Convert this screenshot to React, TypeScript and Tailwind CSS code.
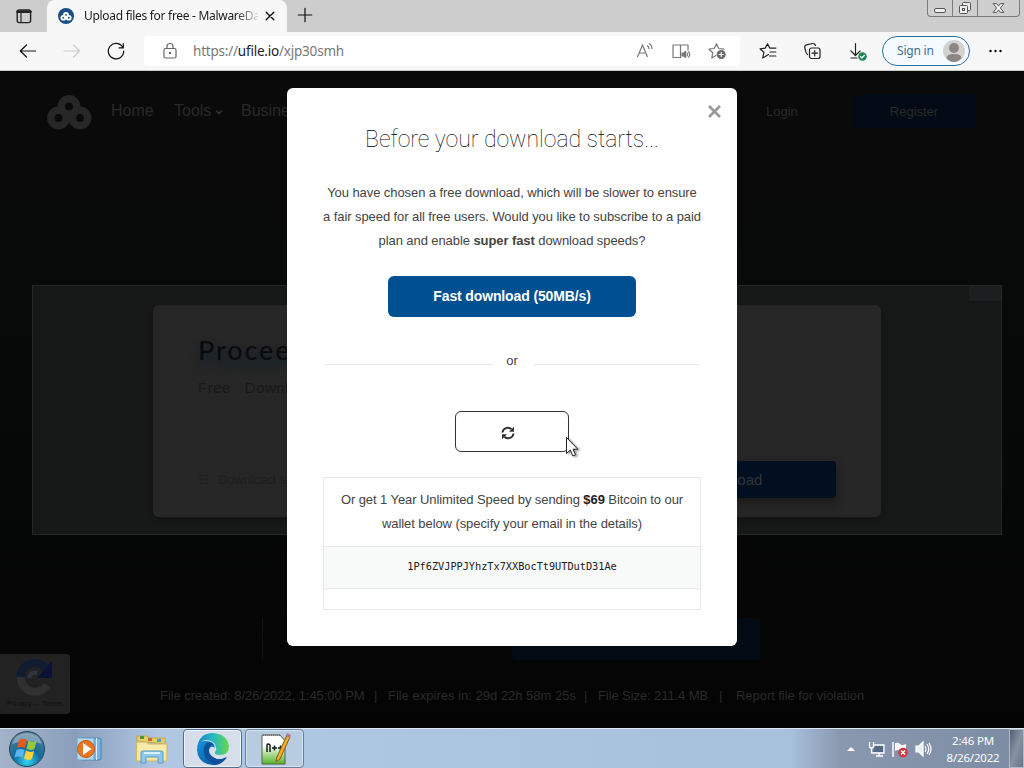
import type { ReactNode } from 'react'

function UfileMark({ className, color }: { className: string; color: string }) {
  return (
    <svg className={className} viewBox="0 0 46 36" fill="none" stroke={color} strokeWidth="7.5">
      <circle cx="12.5" cy="23" r="7.7" />
      <circle cx="34" cy="23" r="7.7" />
      <circle cx="23" cy="11.500" r="7.7" />
      <path d="M17.500 18l11.500 10" strokeWidth="6.500" />
    </svg>
  )
}

function Icon({ children, className = 'size-5', color = '#222' }: { children: ReactNode; className?: string; color?: string }) {
  return (
    <svg className={`shrink-0 ${className}`} viewBox="0 0 20 20" fill="none" stroke={color} strokeWidth="1.2" strokeLinecap="round" strokeLinejoin="round">
      {children}
    </svg>
  )
}

function TabStrip() {
  return (
    <div className="flex h-8 bg-[#cdcdcd]">
      <div className="flex w-[47px] items-center justify-center">
        <Icon className="size-5">
          <rect x="3.2" y="4" width="13.4" height="12.6" rx="2" strokeWidth="1.4" />
          <path d="M3.5 5.700h13" strokeWidth="2.600" />
          <path d="M7 6v10" />
        </Icon>
      </div>
      <div className="flex w-60 items-center rounded-t-lg bg-[#f7f7f7] pl-[11px]">
        <div className="flex size-4 items-center justify-center rounded-full bg-[#1a4f86]">
          <UfileMark className="h-[9px] w-3" color="#fff" />
        </div>
        <div className="ml-2.5 w-[174px] font-['Noto_Sans'] text-[12px] leading-4 tracking-[-0.300px] whitespace-nowrap text-[#1b1b1b] [mask-image:linear-gradient(to_right,#000_152px,transparent_177px)]">
          Upload files for free - MalwareDa
        </div>
        <Icon className="ml-[2px] size-5" color="#111">
          <path d="M6.2 6.2l7.6 7.6M13.8 6.2l-7.6 7.6" strokeWidth="1.4" />
        </Icon>
      </div>
      <Icon className="mt-[5px] ml-[8px] size-5" color="#111">
        <path d="M10 3.3v13.4M3.3 10h13.4" />
      </Icon>
      <div className="mr-[4px] ml-auto flex h-[17px] w-[93px] rounded-b border border-t-0 border-[#7b7b7b] bg-[#cfcfcf]">
        <div className="w-[25px] border-r border-[#7b7b7b]">
          <svg className="h-4 w-6" viewBox="0 0 24 16"><rect x="6.5" y="8.5" width="11" height="4" rx="1.5" fill="#eee" stroke="#555" /></svg>
        </div>
        <div className="w-[25px] border-r border-[#7b7b7b]">
          <svg className="h-4 w-6" viewBox="0 0 24 16" fill="#eee" stroke="#555"><rect x="9.5" y="2.5" width="8" height="8" rx="1" /><rect x="6.500" y="5.500" width="8" height="8" rx="1" /><rect x="9.500" y="8.500" width="2" height="2" /></svg>
        </div>
        <svg className="h-4 w-[42px]" viewBox="0 0 42 16" fill="#eee" stroke="#555"><path d="M15.500 3.500h3.500l2 2.500 2-2.500h3.500l-3.500 4.500 3.500 4.500h-3.500l-2-2.500-2 2.500h-3.500l3.500-4.500z" /></svg>
      </div>
    </div>
  )
}

function Toolbar() {
  return (
    <div className="flex h-[39px] items-center border-b border-[#c9cecb] bg-[#f7f7f7] font-['Noto_Sans']">
      <Icon className="ml-[18px] size-5" color="#111"><path d="M17.500 10H2.500M8.500 4L2.300 10L8.500 16" /></Icon>
      <Icon className="ml-6 size-5" color="#ccc"><path d="M2 10h15.500M11.500 4L17.700 10L11.500 16" /></Icon>
      <Icon className="ml-6 size-5" color="#111"><path d="M16.800 6.500A7.700 7.700 0 1 0 17.700 10M17.300 2.700v4.200h-4.200" /></Icon>
      <div className="ml-[18px] flex h-[30px] w-[596px] items-center rounded bg-white pl-4">
        <Icon className="size-5" color="#666">
          <rect x="4" y="7.500" width="12" height="9.500" rx="1.500" />
          <path d="M7 7.500V5.500a3 3 0 0 1 6 0v2" />
          <circle cx="10" cy="12" r=".6" fill="#666" />
        </Icon>
        <div className="ml-[13px] w-[200px] text-[13.500px] leading-5 tracking-[-0.210px] whitespace-nowrap text-[#777]">
          https://<span className="text-[#222]">ufile.io</span>/xjp30smh
        </div>
        <svg className="ml-auto h-5 w-5" viewBox="0 0 20 20" fill="none" stroke="#777" strokeWidth="1.200">
          <path d="M2.500 16L7.500 4l5 12M4.200 12h6.600M12 4.500q2 1 2 3.500M14 2.500q3 1.500 3 5.500" />
        </svg>
        <Icon className="ml-4 size-5" color="#777">
          <path d="M9.500 4v12.500H2V4h7.500q0 0 0 0H17v5M9.500 16.500H10" />
          <path d="M11 12.200h1.500l2-1.700v6l-2-1.700H11z" fill="#777" />
          <path d="M16 12q1 1.500 0 3M17.700 10.800q1.800 2.700 0 5.400" />
        </Icon>
        <Icon className="mr-[13px] ml-4 size-5" color="#777">
          <path d="M9 14.500L4.800 17l.9-5.200L2 8.200l5.200-.7L9.500 2.800l2.300 4.700 5.200.7" />
          <circle cx="14.200" cy="13.500" r="4" fill="#666" />
          <path d="M14.200 11.500v4M12.200 13.500h4" stroke="#fff" />
        </Icon>
      </div>
      <Icon className="ml-[18px] size-5">
        <path d="M10.500 13.500L4.700 17l1.200-5.700L2 7.800l5.200-.7L9.500 2.800l2.300 4.300h6M12 11h5.800M11.500 15h6.300" />
      </Icon>
      <Icon className="ml-6 size-5">
        <rect x="7.500" y="7" width="10.500" height="10.500" rx="2" />
        <path d="M12.700 9.500v5.500M10 12.200h5.500M5.500 13.500Q4 12.500 3.500 9.500L2.700 6.500Q2.400 4.500 4.500 3.800L10.500 2.500Q13 2.300 13.500 4.500" />
      </Icon>
      <Icon className="ml-[26px] size-5">
        <path d="M7.500 2.500v11.500M3 10l4.500 4.500 4.500-4.500M3 17H9" />
        <circle cx="14.500" cy="15.500" r="4.300" fill="#218455" stroke="none" />
        <path d="M12.500 15.500l1.400 1.500 2.600-2.800" stroke="#fff" />
      </Icon>
      <div className="ml-[14px] flex h-[30px] w-[88px] shrink-0 items-center rounded-full border border-[#2a6f9f] bg-[#f4fafe]">
        <span className="ml-[14px] text-[12px] tracking-[-0.200px] whitespace-nowrap text-[#3d6f9c]">Sign in</span>
        <svg className="ml-[9px] size-[22px]" viewBox="0 0 22 22">
          <circle cx="11" cy="11" r="11" fill="#d2d2d2" />
          <circle cx="11" cy="8" r="5" fill="#8b8785" />
          <path d="M3.500 18q0-4 7.500-4t7.500 4q-3 4-7.500 4t-7.500-4" fill="#8b8785" />
        </svg>
      </div>
      <svg className="ml-[18px] h-4 w-4" viewBox="0 0 16 16"><circle cx="2.500" cy="8" r="1.200" /><circle cx="7.500" cy="8" r="1.200" /><circle cx="12.500" cy="8" r="1.200" /></svg>
    </div>
  )
}

function PageBehind() {
  return (
    <div className="flex h-full flex-col bg-linear-to-b from-[#0a0a0a] via-[#070908] to-[#040404]">
      <div className="flex h-[214px] items-start pt-6 pl-[46px] text-[16px] leading-8 text-[#292929]">
        <UfileMark className="h-9 w-[46px]" color="#272727" />
        <span className="ml-[19px] w-[63px]">Home</span>
        <span className="w-[67px]">Tools<svg className="ml-1 inline size-2" viewBox="0 0 8 8" fill="none" stroke="#333" strokeWidth="1.600"><path d="M1 2.500l3 3 3-3" /></svg></span>
        <span className="w-[525px]">Business</span>
        <span className="w-[86px] text-[13px] leading-[33px]">Login</span>
        <span className="h-[33px] w-[124px] rounded bg-[#020b15] text-center text-[13px] leading-[33px]">Register</span>
      </div>
      <div className="ml-8 flex h-[250px] w-[970px] shrink-0 justify-between border border-[#252725] bg-[#161717] pt-[19px] pl-[120px]">
        <div className="flex h-[212px] w-[728px] flex-col rounded-md bg-[#262626] pt-[27px] pl-[45px] shadow-md">
          <div className="font-['Lato'] text-[27px] leading-9 font-medium tracking-[1.900px] text-[#0a0b0e] [text-shadow:0_7px_8px_#10222c]">Proceed to download</div>
          <div className="mt-[10px] text-[15px] leading-5 tracking-[0.500px] whitespace-pre text-[#191919]">Free   Download</div>
          <div className="mt-[63px] flex items-start justify-between">
            <div className="mt-[9px] flex text-[13px] leading-5 text-[#1e1e1e]">
              <span className="w-5">☷</span>Download speed
            </div>
            <div className="mr-[45px] h-[37px] w-[214px] rounded bg-[#020f20] text-center text-[15px] leading-[37px] text-[#30353c] shadow-[0_5px_8px_#1b1b1b]">Download</div>
          </div>
        </div>
        <div className="-mt-[19px] h-[15px] w-8 bg-[#1b1f1f]" />
      </div>
      <div className="flex flex-1 flex-col">
        <div className="mt-[83px] ml-[262px] flex h-[42px] w-[498px] justify-end border-l border-[#0d1111]">
          <div className="h-full w-[248px] rounded bg-[#020b14]" />
        </div>
        <div className="-mt-[6px] flex items-start">
          <div className="flex h-[60px] w-[70px] flex-col items-center rounded-r bg-[#222] pt-1">
            <svg className="h-10 w-10" viewBox="0 0 40 40" fill="none" strokeWidth="8">
              <path d="M6 21A14 13 0 0 1 32 12" stroke="#111c31" />
              <path d="M37 3v17H22z" fill="#0b1238" />
              <path d="M6 19A14 14 0 0 0 32 27" stroke="#303030" />
              <path d="M14 20a6 6 0 0 1 8-5" stroke="#303640" strokeWidth="4" />
            </svg>
            <span className="text-[8px] leading-3 tracking-[-0.200px] whitespace-pre text-[#111]">Privacy  -  Terms</span>
          </div>
          <div className="mt-[32px] ml-[90px] flex text-[13px] leading-5 whitespace-pre text-[#292929]">
            <span className="w-[214px] tracking-[-0.060px]">File created: 8/26/2022, 1:45:00 PM</span>
            <span className="w-[14px]">|</span>
            <span className="w-[196px]">File expires in: 29d 22h 58m 25s</span>
            <span className="w-[14px]">|</span>
            <span className="w-[121px] tracking-[-0.090px]">File Size: 211.4 MB</span>
            <span className="w-[17px]">|</span>
            <span className="tracking-[-0.050px]">Report file for violation</span>
          </div>
        </div>
      </div>
    </div>
  )
}

function DownloadModal() {
  return (
    <div className="absolute top-[17px] left-[287px] flex h-[558px] w-[450px] flex-col rounded-md bg-white text-[13px] leading-6 tracking-[-0.080px] text-[#444]">
      <svg className="mt-[17px] mr-4 size-[13px] self-end" viewBox="0 0 13 13"><path d="M1 1l11 11M12 1L1 12" stroke="#999" strokeWidth="2.600" /></svg>
      <h1 className="mt-[6px] text-center font-[Roboto] text-[23px] leading-8 font-thin tracking-[-0.030px] text-black">Before your download starts...</h1>
      <p className="mt-[25px] text-center whitespace-nowrap">
        You have chosen a free download, which will be slower to ensure
        <br />
        a fair speed for all free users. Would you like to subscribe to a paid
        <br />
        plan and enable <b>super fast</b> download speeds?
      </p>
      <button className="mt-[23px] h-[41px] w-[248px] self-center rounded-md bg-[#005092] pb-px text-[14px] font-bold tracking-[-0.130px] text-white">Fast download (50MB/s)</button>
      <div className="mx-[37px] mt-[32px] flex h-6 items-center justify-between">
        <div className="mt-[6px] h-px w-[169px] bg-[#e9e9e9]" />
        <span className="mr-[2px]">or</span>
        <div className="mt-[6px] h-px w-[167px] bg-[#e9e9e9]" />
      </div>
      <button className="mt-[38px] flex h-[41px] w-[114px] items-center self-center rounded-md border border-[#333] pl-[45px]">
        <svg className="mt-[2px] size-[14px]" viewBox="0 0 14 14" fill="none" stroke="#333" strokeWidth="2">
          <path d="M1.500 6.500A5.300 5.300 0 0 1 10.500 3.300M12.500 7.500A5.300 5.300 0 0 1 3.500 10.700" />
          <path d="M13 .7v5H8zM1 13.300v-5h5z" fill="#333" stroke="none" />
        </svg>
      </button>
      <div className="mx-9 mt-[25px] flex h-[133px] flex-col border border-[#e7e7e7] pt-[10px]">
        <p className="text-center">
          Or get 1 Year Unlimited Speed by sending <b className="text-[#222]">$69</b> Bitcoin to our
          <br />
          wallet below (specify your email in the details)
        </p>
        <div className="mt-[10px] h-[43px] border-y border-[#e9e9e9] bg-[#f8f9f9] text-center font-['DejaVu_Sans_Mono'] text-[10.300px] leading-[39px] tracking-[-0.040px] text-[#222]">1Pf6ZVJPPJYhzTx7XXBocTt9UTDutD31Ae</div>
      </div>
    </div>
  )
}

function Taskbar() {
  return (
    <div className="flex h-10 items-stretch border-t border-[#dce8f3] font-['Noto_Sans'] [background-image:linear-gradient(to_right,#a4b3c9_0,#8b9fbc_75px,#b0c6e1_160px,#adc6e1_320px,#a7c0dc_790px,#8998af_840px,#7c8ca3)]">
      <svg className="ml-2 h-[38px] w-[38px] self-center" viewBox="0 0 38 38">
        <defs>
          <radialGradient id="orb" cx=".5" cy=".85" r=".85"><stop stopColor="#32d7ef" /><stop offset=".45" stopColor="#126b9e" /><stop offset="1" stopColor="#5b7d96" /></radialGradient>
        </defs>
        <circle cx="19" cy="19" r="17.500" fill="url(#orb)" stroke="#24445f" />
        <path d="M4 14Q7 3 19 3t15 11Q20 8 4 14" fill="#dce7ee" opacity=".4" />
        <path d="M11 10q4-2.500 8 0l-2 8q-4-2-8 0z" fill="#e65a1d" />
        <path d="M20.500 10.500q4 2.500 8 .5l-2 8q-4 2-8-.5z" fill="#97c83b" />
        <path d="M8.500 20q4-2 8 0l-2 7.500q-4-2-8 0z" fill="#5eb5ee" />
        <path d="M18 20.500q4 2.500 8 .5l-2 8q-4 2-8-.5z" fill="#ffd13c" />
      </svg>
      <svg className="ml-[28px] h-[28px] w-[30px] self-center" viewBox="0 0 30 28">
        <path d="M8 3h17l2 1v20l-2 1H8z" fill="#75b5df" stroke="#4682b0" />
        <path d="M3 3h17v22H3z" fill="#b7d7eb" stroke="#6ca2c7" />
        <path d="M22.500 3v22" stroke="#d8eefa" />
        <circle cx="12" cy="14" r="8.500" fill="#ec7722" stroke="#c95515" />
        <path d="M9 8l8.500 6L9 20z" fill="#fff" />
      </svg>
      <svg className="ml-[31px] h-[32px] w-[34px] self-center" viewBox="0 0 34 32">
        <path d="M2 8V3h10l2 2h16v6z" fill="#e8ce69" stroke="#bfa64f" />
        <path d="M5 3h4v3H5z" fill="#4a9440" /><path d="M13 5h4v3h-4z" fill="#d16043" /><path d="M22 6h4v3h-4z" fill="#4b9bc9" />
        <path d="M1.500 9h10l2 2H32v17H1.500z" fill="#f5e6a1" stroke="#d1b865" />
        <path d="M3 13h28M3 16h28" stroke="#fff1bd" />
        <path d="M6 30V20q0-2 2-2h18q2 0 2 2v10h-5v-6H11v6z" fill="#8ec7eb" stroke="#589bc8" />
        <path d="M9 20h16" stroke="#d9f0ff" strokeWidth="2" />
      </svg>
      <div className="ml-[14px] flex w-[59px] items-center justify-center rounded-sm border border-[#526d8d] bg-[#d5deea] shadow-[inset_0_0_0_1px_#edf3f8]">
        <svg className="size-8" viewBox="0 0 32 32">
          <defs>
            <linearGradient id="edgeTop"><stop stopColor="#1684c9" /><stop offset=".5" stopColor="#26b9c4" /><stop offset="1" stopColor="#67d84c" /></linearGradient>
            <linearGradient id="edgeBase" x2="1" y2="1"><stop stopColor="#1495db" /><stop offset="1" stopColor="#0b4797" /></linearGradient>
          </defs>
          <path d="M0 17Q0 7 9 8q8 0 9 7-4-3-6 1-2 6 5 9 6 3 12-1-4 8-13 8Q1 31 0 17" fill="url(#edgeBase)" />
          <path d="M0 15Q2 0 16 0q14 1 16 13 0 9-9 9-6 0-5-3 2-2 1-5-2-7-10-7Q3 7 0 15" fill="url(#edgeTop)" />
          <path d="M9 10q-5 8 0 15 4 5 9 7 8-1 12-8-7 5-14 0-6-4-3-10 1-3 4-2Q14 8 9 10" fill="#0c529b" />
        </svg>
      </div>
      <div className="ml-[3px] flex w-[59px] items-center justify-center rounded-sm border border-[#657f9e] bg-[#b8cbe1] shadow-[inset_0_0_0_1px_#d5e2ef]">
        <svg className="h-[34px] w-8" viewBox="0 0 32 34">
          <defs><linearGradient id="notepad" x2="0" y2="1"><stop offset=".35" stopColor="#fff" /><stop offset="1" stopColor="#55b523" /></linearGradient></defs>
          <path d="M3 3h18l5 6v23H3z" fill="url(#notepad)" stroke="#53624a" />
          <path d="M4 3h18" stroke="#777" strokeWidth="2" strokeDasharray="1 1" />
          <path d="M8 20v-7q1-2 3 0v7M13 16h5m-2.500-2.500v5M19 16h5m-2.500-2.500v5" fill="none" stroke="#161c18" strokeWidth="1.500" />
          <path d="M28 3l3 2-10 22-4 3 1-5z" fill="#f4ae26" stroke="#885a25" />
          <path d="M28 1l4 2-1 3-4-2z" fill="#b57792" />
        </svg>
      </div>
      <div className="ml-auto flex items-center">
        <svg className="mr-[13px] h-1 w-2" viewBox="0 0 8 4"><path d="M4 0l4 4H0z" fill="#fff" /></svg>
        <svg className="h-[18px] w-[18px]" viewBox="0 0 18 18" fill="none" stroke="#fff" strokeWidth="1.300"><path d="M7 6h8v6H5" fill="#526a83" stroke="none" /><path d="M6 5h10v8H6M8 16h7M11 13v3M1.500 2v4q0 2 2 2t2-2V2M3.500 8v5H6" /></svg>
        <svg className="ml-[5px] h-[18px] w-[18px]" viewBox="0 0 18 18"><path d="M2 2v15" stroke="#fff" strokeWidth="1.500" /><path d="M4 3q3-1 5 1t6 0v7q-3 2-6 0t-5 0z" fill="#fff" /><circle cx="12" cy="12.500" r="4.800" fill="#d4333f" /><path d="M10 10.500l4 4m0-4l-4 4" stroke="#fff" strokeWidth="1.500" /></svg>
        <svg className="ml-[5px] h-[18px] w-[18px]" viewBox="0 0 18 18" fill="none" stroke="#fff" strokeWidth="1.200"><path d="M2 6h3l4-4v14l-4-4H2z" fill="#e9eef3" /><path d="M11 6q2 3 0 6M13 4q3.500 5 0 10M15 3q4 6 0 12" /></svg>
        <div className="ml-[9px] w-[64px] text-center text-[11.500px] leading-[17px] tracking-[-0.200px] whitespace-nowrap text-white">2:46 PM<br />8/26/2022</div>
        <div className="ml-[4px] h-full w-[15px] border border-[#b1bac5] bg-linear-to-br from-[#536075] via-[#8793a2] to-[#657487]" />
      </div>
    </div>
  )
}

export default function App() {
  return (
    <div className="relative flex h-[768px] w-[1024px] flex-col overflow-hidden bg-black font-['Liberation_Sans',sans-serif]">
      <TabStrip />
      <Toolbar />
      <main className="relative h-[657px]">
        <PageBehind />
        <DownloadModal />
      </main>
      <Taskbar />
      <svg className="absolute top-[436px] left-[565px] h-6 w-4 drop-shadow-[2px_1px_1px_#0006]" viewBox="0 0 16 24">
        <path d="M1.500 1.500v16l3.800-3.500 2.500 6 2.700-1.200-2.500-5.600h4.800z" fill="#fff" stroke="#222" />
      </svg>
    </div>
  )
}
